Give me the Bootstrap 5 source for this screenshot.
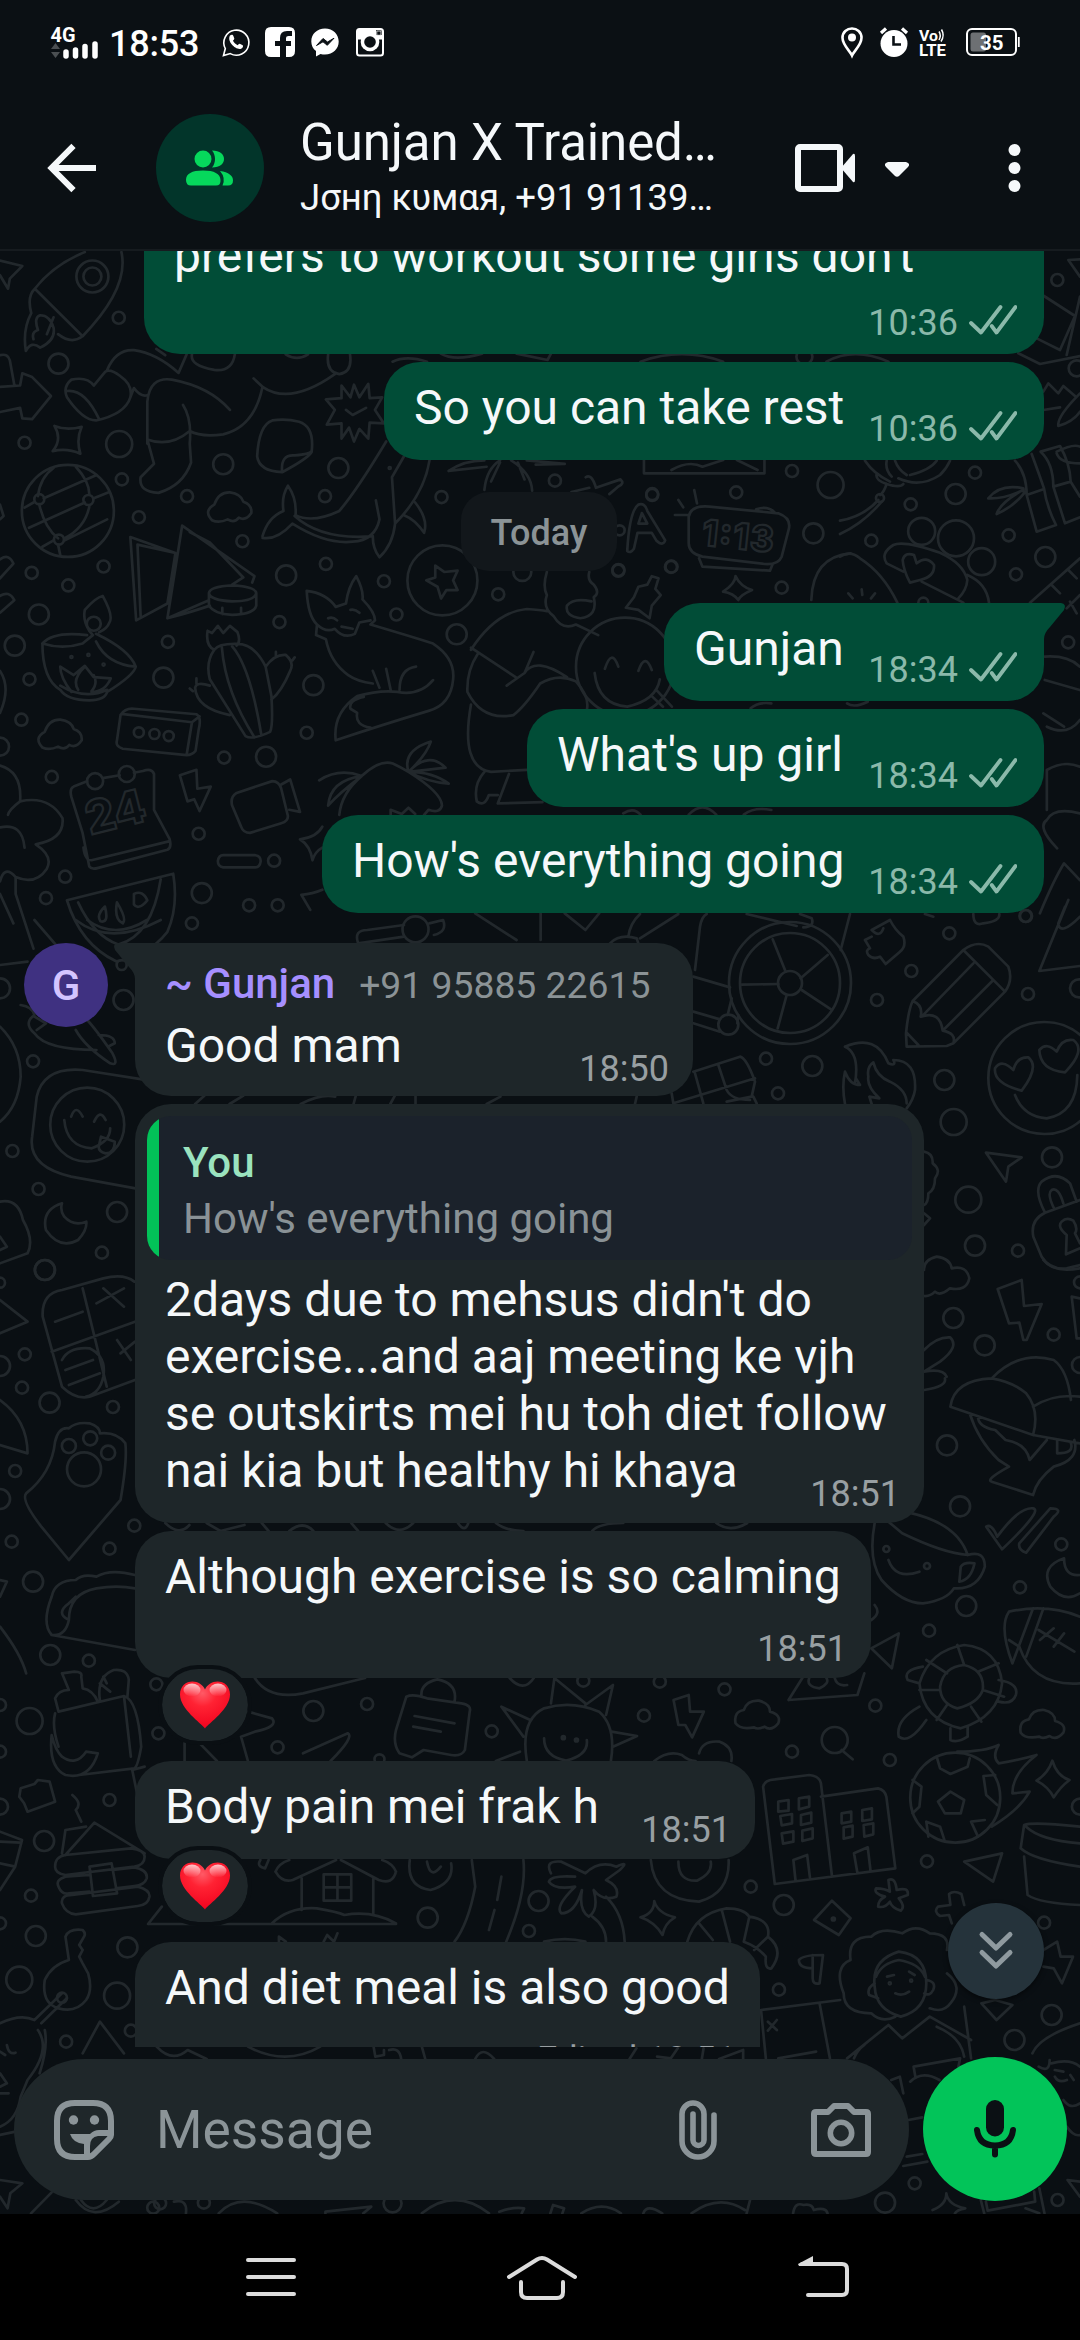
<!DOCTYPE html>
<html lang="en">
<head>
<meta charset="utf-8">
<meta name="viewport" content="width=device-width, initial-scale=1">
<title>Gunjan X Trained</title>
<link href="https://cdn.jsdelivr.net/npm/bootstrap@5.3.0/dist/css/bootstrap.min.css" rel="stylesheet">
<style>
  html, body { background:#000; }
  body { width:1080px; height:2340px; margin:0; overflow:hidden; font-family:Roboto,"Noto Sans",sans-serif; color:#f5f8fa; }
  svg { display:block; flex:none; overflow:visible; }
  .screen { width:1080px; height:2340px; }
  .statusbar { height:84px; background:#0b1014; padding:0 60px 0 51px; color:#fff; }
  .clock { font-size:36px; font-weight:500; line-height:36px; margin:4px 23px 0 10px; letter-spacing:-.2px; }
  .ic-insta { margin-left:17px; }
  .ic-alarm { margin-left:16px; }
  .ic-volte { margin-left:10px; }
  .ic-batt { margin-left:19px; }
  .topbar { height:167px; background:#0b1014; border-bottom:2px solid #161b1f; padding:3px 59px 0 48px; }
  .group-pic { width:108px; height:108px; background:#02352a; margin-left:60px; }
  .titles { width:440px; margin:-3px 0 0 36px; }
  .title-line { font-size:51px; line-height:60px; letter-spacing:-.1px; }
  .sub-line { font-size:36.5px; line-height:44px; margin-top:3px; }
  .ic-video { margin-left:55px; }
  .ic-caret { margin:3px 0 0 29px; }
  .chat { height:1963px; background:#0a0f13; }
  .paper { top:0; left:0; }
  .paper path, .paper ellipse { fill:none; stroke:#22282c; stroke-width:2.7; vector-effect:non-scaling-stroke; stroke-linecap:round; stroke-linejoin:round; }
  .paper text { fill:none; stroke:#22282c; stroke-width:2.2; font-family:Inter,sans-serif; font-weight:800; }
  .thread { height:1796px; padding:0 36px 0 135px; }
  .thread > * { flex-shrink:0; }
  .bub { border-radius:36px; min-height:98px; padding:17px 27px 0 30px; margin-bottom:8px; }
  .bub-out { background:#014d37; }
  .bub-in { background:#1e2629; padding-right:24px; }
  .msg { font-size:48px; line-height:57px; margin-bottom:24px; white-space:nowrap; }
  .time { font-size:36px; line-height:36px; margin-bottom:13px; gap:11px; white-space:nowrap; }
  .bub-out .time { color:#8bb9aa; }
  .bub-in .time { color:#989fa2; margin-bottom:11px; }
  .first { margin-top:-98px; width:900px; height:201px; }
  .first .msg { margin-bottom:20px; }
  .w-rest { width:660px; }
  .w-gunjan { width:380px; border-top-right-radius:0; }
  .w-whats { width:517px; }
  .w-hows { width:722px; }
  .w-good { width:558px; height:153px; margin-top:22px; padding-top:16px; border-top-left-radius:0; }
  .w-reply { width:789px; height:419px; padding-top:18px; }
  .w-calm { width:736px; height:147px; margin-bottom:0; }
  .w-body { width:620px; margin-bottom:0; }
  .w-diet { width:625px; height:147px; }
  .stacked .msg { margin-bottom:26px; }
  .day { background:#12171b; color:#8b9396; font-size:36px; font-weight:500; line-height:83px; height:79px; width:156px; border-radius:28px; margin:24px 0 32px 326px; }
  .tail-r { top:0; left:100%; }
  .tail-l { top:0; right:100%; }
  .who { font-size:42px; line-height:49px; font-weight:500; color:#a68fff; }
  .phone { font-size:37.3px; font-weight:400; color:#8b9396; margin-left:24px; }
  .good-row { height:88px; }
  .good-row .msg { margin-top:7px; }
  .reply-row { height:263px; }
  .reply-row .msg { margin-top:11px; }
  .av { width:84px; height:84px; left:-111px; top:0; background:#3f3181; color:#d4c4ff; font-size:42px; font-weight:500; line-height:86px; }
  .quote-box { background:#1b222b; border-radius:24px; height:144px; margin:-6px -12px 0 -18px; padding:19px 24px 0 36px; font-size:42px; line-height:57px; }
  .quote-box::before { content:""; position:absolute; left:0; top:0; bottom:0; width:12px; background:#02c258; }
  .quote-who { color:#9be3bf; font-weight:500; line-height:55px; }
  .quote-txt { color:#8a9296; }
  .react { width:86px; height:72px; border-radius:36px; background:#1e2629; outline:4px solid #0a0f13; margin:-9px 0 20px 27px; position:relative; z-index:2; }
  .composer { padding:12px 13px 0 14px; gap:14px; }
  .field { width:895px; height:141px; border-radius:71px; background:#1f272a; padding:0 38px 0 40px; color:#8b9498; }
  .hint { font-size:53.3px; line-height:60px; margin-left:42px; }
  .ic-cam { margin-left:94px; }
  .micbtn { width:144px; height:144px; background:#02c459; margin-top:-2px; }
  .jump { width:96px; height:96px; right:36px; top:1652px; background:#25333b; box-shadow:0 2px 5px rgba(0,0,0,.5); z-index:3; }
  .navkeys { height:126px; background:#000; padding:0 231px 0 246px; }
  .ic-home { margin-right:11px; }
</style>
<script src="https://cdn.jsdelivr.net/npm/bootstrap@5.3.0/dist/js/bootstrap.bundle.min.js"></script>
</head>
<body>
<svg width="0" height="0" class="position-absolute">
  <defs>
    <radialGradient id="red" cx=".45" cy=".25" r=".8"><stop offset="0" stop-color="#ff5a66"/><stop offset=".35" stop-color="#ff2233"/><stop offset="1" stop-color="#f0001c"/></radialGradient>
    <linearGradient id="gloss" x1="0" y1="0" x2="0" y2="1"><stop offset="0" stop-color="#fff" stop-opacity=".75"/><stop offset="1" stop-color="#fff" stop-opacity="0"/></linearGradient>
    <symbol id="ticks" viewBox="0 0 48 31"><path d="M2 19L12 28.5L31.5 3M22.7 22L27.5 28.5L46.5 3" fill="none" stroke="currentColor" stroke-width="3.8" stroke-linecap="round" stroke-linejoin="round"/></symbol>
    <symbol id="heart" viewBox="0 0 52 48"><path d="M26 47.500C22 42 1 28 1 13.500C1 5 7 .5 13.500 .5C19 .5 24 4 26 8.500C28 4 33 .5 38.500 .5C45 .5 51 5 51 13.500C51 28 30 42 26 47.500Z" fill="url(#red)"/><ellipse cx="13" cy="9" rx="8.500" ry="6.500" fill="url(#gloss)"/><ellipse cx="39" cy="9" rx="8.500" ry="6.500" fill="url(#gloss)"/></symbol>
  </defs>
</svg>

<div class="screen d-flex flex-column">
  <header class="statusbar d-flex align-items-center">
    <svg width="48" height="32" viewBox="51 26 48 32"><text x="50.500" y="42" font-size="19.500" font-weight="700" fill="#fff" textLength="25" lengthAdjust="spacingAndGlyphs">4G</text><path d="M51 49l4.500-6 4.500 6zM51 52l4.500 6 4.500-6z" fill="#4b4f52"/><path d="M66 52v4M75.500 50v6M85 46.500v9.500M95 44v12" stroke="#fff" stroke-width="5.500" stroke-linecap="round"/></svg>
    <div class="clock">18:53</div>
    <svg width="27" height="29" viewBox="0 0 27 29"><path d="M1.500 27.500L3.300 20.500A12.500 12.500 0 1 1 8.300 25.600Z" fill="none" stroke="#fff" stroke-width="1.600"/><path d="M8 7.500c1.500-1.500 3-.8 3.300.2l1 2.800c.2.800-1 1.800-1.300 2.300.8 1.800 2.500 3.500 4.700 4.400.6-.6 1.400-1.800 2.100-1.500l2.900 1.500c.8.500.2 2.800-1.600 3.500C14 22.500 4.500 13.500 8 7.500z" fill="#fff"/></svg>
    <svg width="30" height="30" viewBox="0 0 30 30" class="ms-3"><path fill="#fff" d="M6 0H24Q30 0 30 6V24Q30 30 24 30H21V19H26V14H21V11Q21 9 23.500 9H27V4H22Q15 4 15 11V14H10V19H15V30H6Q0 30 0 24V6Q0 0 6 0Z"/></svg>
    <svg width="28" height="29" viewBox="0 0 28 29" class="ms-3"><path d="M14 .5C6 .5 .3 6 .3 13.500c0 4 1.700 7.300 4.700 9.500V28.500L9.500 26c1.500.5 3 .6 4.500.6 8 0 13.700-5.600 13.700-13S22 .5 14 .5z" fill="#fff"/><path d="M5.500 17.500L12 10.500L16.500 14L23 10.200L16.300 17.300L12 13.800Z" fill="#0b1014" stroke="#0b1014"/></svg>
    <svg width="28" height="29" viewBox="0 0 28 29" class="ic-insta"><rect x="1" y="1" width="26" height="26.500" rx="2.500" fill="none" stroke="#fff" stroke-width="2"/><path d="M1 1H20V7H26V11.500H1Z" fill="#fff"/><circle cx="14" cy="14" r="9.300" fill="#fff"/><circle cx="14" cy="14" r="5.800" fill="#0b1014"/><rect x="20.800" y="3" width="4.200" height="4.200" fill="#0b1014" stroke="#fff" stroke-width=".8"/></svg>
    <svg width="22" height="30" viewBox="0 0 22 30" class="ms-auto"><path d="M11 28.500C9 24 1.500 18 1.500 10.800C1.500 5 6 1.500 11 1.500S20.500 5 20.500 10.800C20.500 18 13 24 11 28.500Z" fill="none" stroke="#fff" stroke-width="2.600"/><circle cx="11" cy="10.500" r="4" fill="#fff"/></svg>
    <svg width="30" height="30" viewBox="0 0 30 30" class="ic-alarm"><circle cx="15" cy="16.500" r="13.500" fill="#fff"/><path d="M2 6L7 1.500M28 6L23 1.500" stroke="#fff" stroke-width="3.200"/><path d="M14.500 9V17.500H22" fill="none" stroke="#0b1014" stroke-width="2.600"/></svg>
    <svg width="28" height="30" viewBox="0 0 28 30" class="ic-volte"><text x="0" y="13.500" font-size="15.500" font-weight="700" fill="#fff" textLength="19" lengthAdjust="spacingAndGlyphs">Vo</text><path d="M20 4.500Q22.500 8.500 20 13M22.500 2.500Q26 8.500 22 14.500" fill="none" stroke="#fff" stroke-width="1.500"/><text x="0" y="28.500" font-size="16" font-weight="700" fill="#fff" textLength="27" lengthAdjust="spacingAndGlyphs">LTE</text></svg>
    <svg width="54" height="28" viewBox="0 0 54 28" class="ic-batt"><rect x="1" y="1" width="49" height="26" rx="5" fill="none" stroke="#fff" stroke-width="2"/><rect x="4.500" y="4.500" width="15.500" height="19" rx="2.500" fill="#6d7073"/><path d="M52.800 9V19" stroke="#fff" stroke-width="1.800"/><text x="14" y="21.500" font-size="21" font-weight="700" fill="#fff" textLength="23.500" lengthAdjust="spacingAndGlyphs">35</text></svg>
  </header>

  <div class="topbar d-flex align-items-center">
    <svg width="48" height="48" viewBox="0 0 48 48"><path d="M25.500 1.800L3.500 24L25.500 46.200M4 24H48" fill="none" stroke="#f5f8fa" stroke-width="6"/></svg>
    <div class="group-pic rounded-circle d-flex align-items-center justify-content-center">
      <svg width="48" height="36" viewBox="0 0 48 36"><g fill="#06d85c"><circle cx="17" cy="9" r="8.500"/><path d="M26 .5C34 .5 38 4.500 38 9S34 17.500 26 17.500C30 13 30 5 26 .5Z"/><path d="M0 30Q0 20.500 17 20.500T34.500 30Q35 35.500 30 35.500H5Q0 35.500 0 30Z"/><path d="M34 21Q47 23 47 30.500Q47 35.500 42 35.500H36.500Q40 28 34 21Z"/></g></svg>
    </div>
    <div class="titles">
      <div class="title-line text-nowrap">Gunjan X Trained…</div>
      <div class="sub-line text-nowrap">Jσнη кυмαя, +91 91139…</div>
    </div>
    <svg width="61" height="48" viewBox="0 0 61 48" class="ic-video"><rect x="3" y="3" width="42" height="42" rx="2" fill="none" stroke="#f5f8fa" stroke-width="6"/><path d="M46 24L58 10Q60 9 60 12V36Q60 39 58 38Z" fill="#f5f8fa"/></svg>
    <svg width="24" height="15" viewBox="0 0 24 15" class="ic-caret"><path d="M3 0H21Q26 1.500 23 5L14.500 13.500Q12 16 9.500 13.500L1 5Q-2 1.500 3 0Z" fill="#f5f8fa"/></svg>
    <svg width="13" height="48" viewBox="0 0 13 48" class="ms-auto"><g fill="#f5f8fa"><circle cx="6.500" cy="6" r="6"/><circle cx="6.500" cy="24" r="6"/><circle cx="6.500" cy="42" r="6"/></g></svg>
  </div>

  <main class="chat position-relative overflow-hidden">
    <svg class="paper position-absolute" id="paper" width="1080" height="1963" viewBox="0 251 1080 1963">
      <text x="90" y="835" font-size="46" transform="rotate(-14 90 835)">24</text>
      <text x="701" y="545" font-size="36" transform="rotate(6 701 545)" textLength="72">1:13</text>
    </svg>

    <div class="thread position-relative overflow-hidden d-flex flex-column align-items-start">
      <div class="bub bub-out first align-self-end d-flex flex-column justify-content-end">
        <div class="msg">prefers to workout some girls don't</div>
        <div class="time d-flex align-items-baseline justify-content-end">10:36<svg width="48" height="31"><use href="#ticks"/></svg></div>
      </div>
      <div class="bub bub-out w-rest align-self-end d-flex justify-content-between align-items-end">
        <div class="msg">So you can take rest</div>
        <div class="time d-flex align-items-baseline">10:36<svg width="48" height="31"><use href="#ticks"/></svg></div>
      </div>
      <div class="day text-center">Today</div>
      <div class="bub bub-out w-gunjan position-relative align-self-end d-flex justify-content-between align-items-end">
        <svg class="tail-r position-absolute" width="22" height="34"><path d="M-1 0H17Q23 1 20 7L6 24Q0 30 0 36H-1Z" fill="#014d37"/></svg>
        <div class="msg">Gunjan</div>
        <div class="time d-flex align-items-baseline">18:34<svg width="48" height="31"><use href="#ticks"/></svg></div>
      </div>
      <div class="bub bub-out w-whats align-self-end d-flex justify-content-between align-items-end">
        <div class="msg">What's up girl</div>
        <div class="time d-flex align-items-baseline">18:34<svg width="48" height="31"><use href="#ticks"/></svg></div>
      </div>
      <div class="bub bub-out w-hows align-self-end d-flex justify-content-between align-items-end">
        <div class="msg">How's everything going</div>
        <div class="time d-flex align-items-baseline">18:34<svg width="48" height="31"><use href="#ticks"/></svg></div>
      </div>

      <div class="bub bub-in w-good position-relative">
        <svg class="tail-l position-absolute" width="22" height="34"><path d="M23 0H5Q-1 1 2 7L16 24Q22 30 22 36H23Z" fill="#1e2629"/></svg>
        <div class="av position-absolute rounded-circle text-center">G</div>
        <div class="who text-nowrap">~ Gunjan<span class="phone">+91 95885 22615</span></div>
        <div class="good-row d-flex justify-content-between align-items-end">
          <div class="msg align-self-start">Good mam</div>
          <div class="time">18:50</div>
        </div>
      </div>

      <div class="bub bub-in w-reply">
        <div class="quote-box position-relative overflow-hidden">
          <div class="quote-who">You</div>
          <div class="quote-txt">How's everything going</div>
        </div>
        <div class="reply-row d-flex align-items-end position-relative">
          <div class="msg align-self-start">2days due to mehsus didn't do<br>exercise...and aaj meeting ke vjh<br>se outskirts mei hu toh diet follow<br>nai kia but healthy hi khaya</div>
          <div class="time position-absolute end-0 bottom-0">18:51</div>
        </div>
      </div>

      <div class="bub bub-in w-calm stacked">
        <div class="msg">Although exercise is so calming</div>
        <div class="time text-end">18:51</div>
      </div>
      <div class="react d-flex align-items-center justify-content-center"><svg width="52" height="48"><use href="#heart"/></svg></div>

      <div class="bub bub-in w-body d-flex justify-content-between align-items-end">
        <div class="msg">Body pain mei frak h</div>
        <div class="time">18:51</div>
      </div>
      <div class="react d-flex align-items-center justify-content-center"><svg width="52" height="48"><use href="#heart"/></svg></div>

      <div class="bub bub-in w-diet stacked">
        <div class="msg">And diet meal is also good</div>
        <div class="time text-end">Edited 18:51</div>
      </div>
    </div>

    <div class="jump position-absolute rounded-circle d-flex align-items-center justify-content-center">
      <svg width="34" height="40" viewBox="0 0 34 40"><path d="M3 3.500L17 17L31 3.500M3 21.500L17 35L31 21.500" fill="none" stroke="#8f9a9f" stroke-width="5" stroke-linecap="round" stroke-linejoin="round"/></svg>
    </div>

    <div class="composer position-relative d-flex align-items-start">
      <div class="field d-flex align-items-center">
        <svg width="60" height="60" viewBox="0 0 60 60"><path d="M21 3H39Q57 3 57 21V35Q57 37 55 39L40 54Q37 57 34 57H21Q3 57 3 39V21Q3 3 21 3Z" fill="none" stroke="currentColor" stroke-width="6"/><circle cx="19.500" cy="20" r="4.700" fill="currentColor"/><circle cx="40.500" cy="20" r="4.700" fill="currentColor"/><path d="M16 34H36Q40 30 45 30H57V36H44Q36 37 36 46V56H30V54V44Q19 43 16 34Z" fill="currentColor"/></svg>
        <div class="hint">Message</div>
        <svg width="38" height="60" viewBox="0 0 38 60" class="ms-auto"><path d="M35 15V41A16 16 0 0 1 3 41V14A11 11 0 0 1 25 14V40A5.500 5.500 0 0 1 14 40V14" fill="none" stroke="currentColor" stroke-width="5.600" stroke-linecap="round"/></svg>
        <svg width="60" height="54" viewBox="0 0 60 54" class="ic-cam"><path d="M5 9H17L23 3H37L43 9H55Q57 9 57 11V49Q57 51 55 51H5Q3 51 3 49V11Q3 9 5 9Z" fill="none" stroke="currentColor" stroke-width="6" stroke-linejoin="round"/><circle cx="30" cy="30" r="10.700" fill="none" stroke="currentColor" stroke-width="5.600"/></svg>
      </div>
      <div class="micbtn rounded-circle d-flex align-items-center justify-content-center">
        <svg width="42" height="58" viewBox="0 0 42 58"><rect x="12" y="0" width="18" height="36.500" rx="9" fill="#0b1014"/><path d="M3 30Q5 45.500 21 45.500T39 30M21 46V54.500" fill="none" stroke="#0b1014" stroke-width="6" stroke-linecap="round"/></svg>
      </div>
    </div>
  </main>

  <nav class="navkeys d-flex align-items-center justify-content-between">
    <svg width="50" height="40" viewBox="0 0 50 40"><path d="M2 3H48M2 20H48M2 37H48" stroke="#dcdcdc" stroke-width="4" stroke-linecap="round"/></svg>
    <svg width="72" height="44" viewBox="505 2253 72 44" class="ic-home"><path d="M508 2275L536 2257.500Q541 2254.500 546 2257.500L574 2275M520 2280V2290Q520 2296 526 2296H556Q562 2296 562 2290V2280" fill="none" stroke="#dcdcdc" stroke-width="4" stroke-linecap="round" stroke-linejoin="round"/></svg>
    <svg width="51" height="42" viewBox="798 2255 51 42"><path d="M802 2263H842Q847 2263 847 2268V2289Q847 2294 842 2294H808" fill="none" stroke="#dcdcdc" stroke-width="4" stroke-linecap="round"/><path d="M798 2263L813 2255V2265H799Z" fill="#dcdcdc"/></svg>
  </nav>
</div>

<script>
/* Wallpaper doodles: each sheet has an origin, a scale, line art and bubbles [x, y, radius]. */
const sheets = [
{o:[0,250],k:[2.24,2.376],d:`M78 92Q60 110 70 150M78 92L185 205Q160 225 130 200M78 92Q120 35 190 5M185 205Q290 90 272 5M70 150Q50 190 58 240Q70 215 90 232Q125 215 120 185Q112 155 90 155Q75 160 85 190Q70 195 75 212M120 160L105 200
M0 25L50 38L22 68L18 92L0 60M0 325L45 322L50 293L72 302L114 347L72 402L50 400L45 375L0 385M0 250Q18 245 22 262L32 320
M210 322Q195 300 160 308Q140 325 150 350Q185 405 215 405Q280 390 292 350Q298 320 270 300Q245 280 235 290ZM150 335Q190 330 222 402M240 285Q260 235 300 238Q350 245 400 292L418 248M350 235L370 250M292 350L300 328Q315 350 330 345
M330 460V360Q335 300 385 308Q470 325 515 380M410 368Q430 400 425 460L428 505Q410 560 355 577Q310 575 315 540L345 508L330 450Q380 470 425 430Q450 445 500 438Q570 420 588 325L568 305M588 325Q650 370 750 295M735 248Q730 290 760 295Q790 290 784 248M640 248Q665 265 690 248M430 248Q425 275 480 285Q520 290 526 248
M610 405Q580 415 576 490Q580 525 632 528Q690 495 698 480Q705 420 670 408Q640 400 610 405ZM632 528Q628 485 660 488Q695 485 698 478
M793 320L805 350L825 318L828 352L856 350L840 380L860 412L828 410L825 448L805 425L793 455L782 422L765 448V412L732 415L750 380L730 355L765 352V322L785 350ZM775 380L790 392L820 375
M122 418Q150 430 183 420Q170 450 180 484Q150 470 118 478Q140 450 122 418Z
M98 590L215 535M88 605Q100 660 130 685M55 612L75 600M65 660L190 600M210 590L245 575M170 515Q200 550 200 580M200 610Q190 660 145 685M95 705L120 690M145 690L240 640M85 585Q90 540 120 518M130 700L135 725
M510 640Q490 650 475 642Q455 620 480 605Q490 575 515 576Q540 580 545 598Q565 605 563 625Q550 645 535 636Q525 650 510 640ZM130 1180Q110 1190 95 1182Q75 1160 100 1145Q110 1115 135 1116Q160 1120 165 1138Q185 1145 183 1165Q170 1185 155 1176Q145 1190 130 1180Z
M588 680Q600 635 635 620Q630 585 645 560Q665 590 662 630Q700 650 760 620Q800 570 865 455M588 684Q620 690 655 650Q730 700 790 693Q840 690 850 640L842 595M660 632Q720 690 835 680Q835 710 850 730Q880 700 885 650L878 540L905 490M885 650Q950 580 962 500M905 630Q930 640 950 672Q960 640 930 600
M292 682L393 720L375 840L305 880ZM308 700L315 870M308 700L393 720M408 655L375 875L468 832M408 655L570 775L565 790M425 670L470 695L545 778L520 795M375 875Q430 860 470 845M468 815Q470 800 520 797Q572 800 574 815Q570 835 520 835Q470 832 468 815V845Q480 865 520 867Q570 865 574 845V815M498 850V865M540 850V862
M200 905Q185 880 190 855Q215 825 230 822Q255 870 245 885Q240 900 222 908M200 905L208 915L185 935Q140 950 95 935Q95 1020 135 1045Q150 1070 200 1070Q235 1070 240 1050Q300 1010 304 990Q290 950 215 912M95 935Q120 905 195 915M215 930Q240 985 304 990M135 1035Q190 1070 240 1045M160 1050Q135 1015 135 990L165 1010L190 988L210 1015L248 1018Q235 1050 205 1050M175 1045Q160 1020 190 990M205 1048Q220 1030 210 1010
M465 905L475 910L488 893L500 910L515 893L532 908Q540 930 530 940M465 905Q460 940 480 950M480 950Q460 980 470 1020L550 1155Q565 1165 605 1145Q612 1130 608 1060L595 990Q570 935 530 936Q490 935 480 950M497 945Q505 1050 570 1158M520 942Q560 990 585 1150M595 990Q615 960 640 962Q660 980 650 1000Q630 1050 608 1068M470 1035Q440 1025 437 1040Q440 1090 515 1105M618 965V955M655 975L660 968M432 1048L425 1042M440 1030V1018
M687 810Q690 870 710 890L708 915L730 925Q740 980 780 1010Q800 1025 835 1030M687 810Q730 815 752 848L775 840Q780 800 798 775Q815 810 812 830Q840 860 840 880L830 890Q910 915 970 935Q1020 970 1015 1020Q1010 1080 960 1095Q850 1130 752 1165Q745 1100 800 1060Q850 1045 890 1050Q940 1060 970 1022M710 890Q730 910 750 900Q770 925 795 912L805 885L830 880M735 875Q745 870 755 880M785 855Q795 852 805 862M765 895L790 900M895 1045Q895 995 932 990M865 995L875 1045M835 1000L850 1040M815 1062Q780 1070 785 1090L800 1100Q795 1130 830 1135
M975 750L995 765L1025 762L1015 785L1025 808L1000 808L988 828L980 800L955 785L975 778Z
M1055 950Q1110 860 1180 853Q1210 855 1225 858M1225 765Q1215 800 1225 820Q1215 850 1240 870Q1260 905 1290 890L1340 915M1320 765Q1315 785 1330 795Q1345 815 1330 825Q1340 870 1300 875Q1265 870 1270 845Q1285 825 1325 835M1055 945L1155 1015M1195 955L1175 1005L1135 1035M1175 1005Q1200 965 1270 1015M1070 960Q1045 1000 1047 1050Q1080 1120 1150 1105Q1175 1085 1210 1030Q1250 1005 1290 1025Q1320 1060 1315 1090M1055 1080Q1030 1230 1100 1240L1180 1235M1085 1240Q1060 1270 1068 1310Q1085 1325 1095 1295L1115 1295M1140 1245L1115 1315L1215 1312
M1355 995Q1370 945 1385 990M1430 1000Q1445 955 1460 998M1332 1005Q1340 1080 1405 1085Q1470 1070 1478 1020M1460 1060L1485 1085M1470 1045L1505 1085
M1430 800L1450 795L1460 775L1475 780L1468 805L1480 820L1460 845L1455 875L1430 855L1402 850L1420 825Z
M1405 715Q1410 620 1430 605Q1445 600 1450 620L1490 690Q1485 705 1470 690L1460 672H1428L1420 710Q1412 722 1405 715ZM1430 650H1450L1438 625ZM1312 540Q1325 530 1335 565L1390 545Q1400 555 1385 562L1365 580M1280 575L1320 565
M1005 525Q1040 500 1085 500M1005 525L1090 515M1085 570Q1090 520 1120 500M1100 550L1120 505M1145 500Q1190 530 1192 572M1160 505L1175 545M1180 500L1265 508L1200 510
M0 735Q20 720 30 745L0 780M0 822Q20 808 32 832L0 862M0 1000Q25 1040 0 1100M0 605L8 632L0 640
M262 1165L270 1105Q280 1088 300 1090L440 1103Q452 1110 445 1140L438 1190Q430 1200 418 1200L275 1185Q258 1180 262 1165ZM272 1102L430 1122L418 1200M430 1122L447 1108
M195 1262L165 1275Q155 1280 160 1300L185 1385L200 1465Q205 1473 220 1468L375 1425Q385 1420 380 1400L345 1330V1245Q340 1230 320 1238L300 1242M230 1255L268 1248M187 1420Q190 1450 205 1450L378 1405
M403 1248L440 1235L442 1280L472 1275L447 1333L435 1305L420 1310ZM520 1320Q515 1300 530 1290L610 1262Q625 1262 630 1280L645 1345Q645 1358 630 1362L560 1385Q545 1385 540 1370ZM630 1270L650 1258L672 1335L648 1330
M500 1438H572Q584 1440 584 1452Q582 1467 572 1467H500Q488 1465 488 1452Q490 1438 500 1438Z
M715 1260Q760 1230 810 1250Q740 1260 735 1320Q760 1290 810 1250Q850 1210 880 1220Q900 1230 915 1240Q900 1190 965 1168Q955 1200 915 1240Q960 1190 998 1230Q960 1235 915 1240Q970 1240 1005 1268Q960 1265 915 1240Q990 1290 990 1320Q985 1340 960 1330L950 1342M760 1342Q765 1290 810 1250M875 1342V1330L900 1340L915 1325L930 1340
M722 1370Q710 1395 672 1400Q695 1415 700 1450Q705 1430 722 1420M722 1520Q700 1530 675 1532L695 1568
M0 1225Q50 1240 45 1310Q20 1330 18 1342M45 1310Q110 1295 140 1350Q145 1400 80 1412Q120 1440 105 1470Q80 1510 35 1490Q10 1460 0 1500M0 1372Q50 1360 55 1420M35 1490V1530L75 1660M0 1530L30 1600
M150 1545L388 1482Q400 1560 375 1620Q330 1680 260 1690Q180 1650 150 1545ZM175 1550Q210 1630 265 1650Q340 1630 360 1495M300 1530Q320 1520 330 1545Q310 1570 300 1555ZM262 1550Q285 1590 275 1600Q255 1590 262 1550ZM235 1560Q215 1580 225 1595Q245 1600 235 1560Z`,
c:[[207,63,16],[207,63,9],[152,620,46],[88,592,5],[198,594,5],[132,688,5],[210,888,7],[991,785,35],[1400,990,49],[311,1146,5],[346,1150,5],[378,1155,5],[213,1262,8],[284,1245,8],[266,161,6],[131,270,10],[55,458,6],[267,461,13],[273,545,6],[311,635,6],[419,585,6],[500,509,10],[543,692,6],[758,518,10],[728,585,6],[989,587,6],[873,518,1],[641,773,10],[730,746,6],[860,787,6],[888,866,6],[1023,913,10],[1116,818,6],[1170,765,9],[1243,548,6],[1461,580,6],[1385,762,6],[1503,753,6],[1388,666,5],[71,767,6],[153,797,6],[232,752,6],[87,866,10],[33,940,10],[376,931,6],[66,1020,6],[366,1016,10],[626,884,6],[702,1034,10],[687,1147,6],[48,1116,6],[0,1180,9],[116,1252,6],[596,1204,10],[502,1206,6],[445,1387,6],[614,1451,6],[146,1489,6],[452,1528,10],[103,1540,6],[558,1557,6],[622,1557,6],[160,967,1],[198,962,1],[232,985,1]]},
{o:[840,230],k:[3,3],d:`M720 88L685 90L720 140M612 198L705 258L660 360L590 325M720 200L680 375M535 370L600 402L720 378M610 485L625 460L655 490L670 468L705 498M610 540L660 532M720 490Q650 560 655 588Q700 575 720 545
M525 692Q560 730 560 795L590 905L648 885Q620 830 612 775Q600 740 575 672M560 795L610 778M602 665Q640 700 640 770L675 880L720 862M602 665L660 648Q690 700 692 755L720 800M640 770L692 755M650 665Q700 640 720 650M650 670Q660 700 720 700M445 805Q480 760 550 775L552 790Q520 830 470 852Q480 820 540 785M445 805Q490 808 550 780
M75 692Q100 730 150 755M110 732Q105 750 140 762Q180 775 190 762M140 692Q135 720 155 740M165 692Q175 720 200 735M210 735Q270 720 290 692M175 745Q240 775 300 735Q320 715 330 692M140 762Q130 790 120 795M125 815Q70 880 0 912M115 810Q70 860 0 872
M140 1000Q120 970 160 945Q190 930 300 968Q370 1000 382 1050Q380 1080 355 1105M140 1000L190 1025M210 1058Q190 1020 188 990Q195 965 222 975L230 1000Q260 975 282 1005Q285 1040 240 1050ZM245 1055L370 1118M382 1035Q440 1060 447 1118
M570 1118L720 985M680 1135L720 1095M635 1065L660 1090M685 1020L710 1045M690 1115L710 1150M0 980Q30 960 60 985Q130 1030 172 1118M65 1078L67 1095M25 1090L38 1105M105 1090L93 1105`,
c:[[120,804,4],[245,904,13.5],[348,925,18],[425,995,13.5],[652,150,6],[710,415,8],[405,728,6],[347,792,10],[212,823,6],[94,932,6],[506,916,6],[616,981,10],[528,1033,6],[250,1118,5]]},
{o:[0,240],k:[1.452,3],d:`M1000 830Q1003 795 1030 800L1130 820Q1150 835 1145 870L1135 950Q1130 975 1110 972L1020 950Q1000 940 1000 910ZM1015 955L1020 980L1118 992L1122 972M1098 808Q1115 795 1125 818M1012 790L1008 750M992 802L985 780M980 825H998
M935 660V700H1110V660M975 690Q1000 660 1020 680L1050 660M1070 660L1100 690M1050 1055Q1068 1030 1068 1008Q1075 1040 1092 1050Q1075 1065 1072 1080Q1065 1060 1050 1055M1178 1080Q1180 950 1235 940
M570 365Q590 345 620 365M640 341Q660 365 700 341M930 365Q990 320 1050 365M1200 365Q1240 320 1290 365M750 341L795 360L800 341`,
c:[[1206,735,13],[1181,880,10],[947,765,6],[1069,757,6],[1150,693,6],[1135,1043,6],[975,980,6],[898,990,6],[1168,350,8]]},
{o:[0,580],k:[1.452,3],d:`M1517 230Q1550 225 1568 260M1517 300L1568 330M1520 440Q1550 470 1568 420M1515 400L1545 440M1520 690V570Q1545 540 1568 560M1535 805Q1505 740 1520 720Q1530 680 1568 700M1510 1000Q1530 900 1545 850L1568 900
M690 1000L750 1080M785 1000V1080M820 1000L850 1050L870 1000M1090 385Q1100 365 1120 370M1230 370Q1240 385 1260 365M905 700Q920 680 930 704M1000 704Q1020 660 1040 704M1080 704Q1095 680 1120 690`,
c:[[1551,187,6],[1489,1008,6]]},
{o:[0,920],k:[2.178,3],d:`M75 0L125 80M165 0Q240 80 350 0M190 0Q250 60 320 0M0 135L60 125M780 70Q770 30 800 30L880 15M780 70L880 50M935 10L965 0Q975 35 945 45
M45 255Q70 260 75 285Q50 310 75 340Q100 390 210 390M75 290L100 310L80 330M165 330Q185 380 240 430Q260 440 245 400Q210 330 190 300M215 345Q250 345 250 370L235 380
M295 805L155 770Q60 740 70 650L80 530Q95 440 180 450L310 478M155 590Q165 550 180 590M205 605Q218 565 230 600M140 600Q145 680 200 685Q240 665 240 625M215 680L220 650L250 665Q250 700 230 700Q215 695 215 680
M135 850Q90 870 100 930Q130 990 170 960Q190 930 188 905Q160 920 140 890Q130 870 135 850ZM0 320Q45 380 45 470Q40 560 0 605M0 845Q40 835 50 900Q75 960 60 1000L0 1030M0 990L15 980L0 950
M425 552L445 527M500 552L530 527M655 552Q700 520 730 530M770 552L775 527M850 552L860 527M905 552V527M1060 552L1090 530`,
c:[[905,28,13],[190,614,37],[72,424,6],[27,693,6],[84,807,6],[255,876,10],[222,998,6],[98,1050,10],[269,240,10],[265,135,5],[418,10,6],[0,205,10]]},
{o:[600,900],k:[3,3],d:`M518 118L557 215M602 235L683 165M425 254L535 252M605 270L693 328M560 285L533 385M320 42Q305 50 300 80L285 210M280 230L390 262M440 42L590 78M610 82Q645 80 635 55L600 42M750 42L722 150M395 295L383 345M280 335L360 358M280 370L360 395M415 345L412 370M85 110Q90 70 120 42M120 115L235 42M30 130Q60 100 110 115L115 130
M815 90L870 60Q885 90 910 110Q920 140 900 155L857 192L840 170Q820 180 805 165Q795 150 810 145L795 120L815 110M815 90Q840 115 850 85
M938 303L1090 150Q1130 120 1165 140L1225 200Q1240 240 1215 275L1060 430L1040 438L920 440L918 400Q925 330 938 303ZM1090 150L1215 275M965 350L1120 190M1030 390L1180 240M938 303Q970 315 962 350Q1020 330 1028 392Q1070 400 1060 430M920 398L955 435
M735 440Q830 400 865 490Q890 500 880 480Q950 480 945 570Q940 600 920 625M735 440Q780 460 765 550M735 612Q725 560 735 515Q750 555 780 555L768 535M815 612L808 590L838 595Q800 560 805 530Q800 500 820 487Q830 530 870 545Q920 570 920 610
M280 515L420 470Q440 475 465 545L455 590L380 605M215 580L220 610L465 535M285 520L310 610M355 495L380 570Q395 600 450 600M460 590L470 610M110 590L105 612
M1265 572Q1180 550 1185 505Q1205 475 1240 510Q1250 470 1285 472Q1320 500 1265 572ZM1395 517Q1320 510 1318 450Q1340 425 1370 455Q1385 415 1420 420Q1460 450 1395 517ZM1245 585Q1270 650 1340 655Q1430 640 1432 525
M1158 758L1265 772L1225 800L1218 845ZM1335 938L1440 900M1335 938Q1290 960 1300 1010L1325 1070Q1350 1110 1400 1105L1440 1095M1335 938Q1300 870 1325 845Q1370 810 1410 850L1430 905M1362 925Q1340 880 1355 870Q1375 860 1390 910M1398 1063L1400 1005Q1370 980 1385 965Q1400 950 1420 962Q1435 985 1425 1000L1440 1030M1398 1063L1440 1045
M972 1110Q970 1080 1010 1070Q1050 1075 1055 1105Q1100 1095 1108 1135Q1100 1175 1050 1165Q1020 1190 1005 1175Q990 1190 972 1188M1193 1167L1265 1140L1272 1218L1325 1212L1280 1320H1270L1258 1268L1227 1270ZM1440 1195L1415 1190L1430 1315H1440
M972 755Q1000 760 998 790Q1025 810 1005 835Q1005 870 985 880Q985 910 972 915M972 940L990 955L972 975M972 1350Q1010 1310 1050 1312Q1080 1340 1020 1385L972 1415Q1030 1405 1040 1430
M1405 0L1318 213L1440 198M1440 50Q1380 110 1375 70L1395 20M975 42L1000 50M1120 42Q1120 80 1150 70Q1200 65 1198 42`,
c:[[570,249,61],[570,249,50],[570,249,12],[385,374,10],[1333,534,56],[1048,100,6],[934,213,6],[831,300,6],[1278,48,6],[1284,282,6],[1437,265,9],[498,476,6],[637,498,10],[534,580,6],[1033,540,10],[1061,666,13],[1356,772,10],[1105,899,13],[1125,1037,10],[1254,1052,6],[1060,1254,10],[1154,1336,10],[1361,1304,6],[1440,1147,6],[1440,1395,8]]},
{o:[0,1260],k:[1.452,3],d:`M62 170Q60 100 90 90L150 55Q180 40 195 65M62 170L90 380Q110 420 130 410L196 360M75 275L196 185M120 85L155 380M80 185L120 155M140 130L180 85M150 85L180 140M170 240L190 300M175 280L196 245M90 300Q100 260 130 265Q155 290 150 350Q145 400 125 410M95 330L135 300M100 375L145 340
M80 545Q85 500 100 505Q110 485 130 490Q145 500 145 520Q170 515 182 550Q185 600 175 720L100 900L60 800Q30 720 38 700Q75 640 80 545
M196 1170L75 1125Q60 1090 75 1010Q80 960 110 960Q120 940 140 950Q160 925 196 945M100 1080Q100 1000 140 985Q170 975 196 985M75 1125Q95 1130 100 1080Q80 1060 100 1030L110 1010M0 120L40 185L0 220M0 420Q40 480 40 580L0 555M0 960L10 965L0 1010M0 1100Q30 1180 38 1240
M1515 0Q1530 40 1568 25M1380 440Q1385 360 1440 355Q1480 270 1530 300Q1550 330 1555 420M1380 440L1500 525Q1510 450 1490 400Q1470 365 1440 355M1408 460Q1420 540 1450 600L1465 620Q1430 660 1440 665L1500 705Q1505 660 1530 620Q1568 600 1560 540M1500 525L1568 550M1500 440Q1530 400 1568 410M1420 470Q1420 500 1445 510L1460 540Q1490 550 1495 600L1520 540M1535 540V580Q1560 580 1555 550M1342 390Q1375 380 1372 355
M1432 800Q1440 790 1448 830Q1480 740 1500 745Q1515 750 1455 868ZM1480 850L1525 745Q1545 745 1530 770L1490 878Q1478 870 1480 850
M1270 790Q1260 900 1280 960Q1310 1030 1340 1030Q1375 1020 1385 985Q1420 990 1430 920Q1430 870 1405 885M1320 758Q1390 790 1405 885Q1370 880 1310 820L1290 785M1393 965Q1410 960 1415 910Q1400 905 1395 920L1393 965M1290 900Q1300 960 1335 935M1545 895Q1510 920 1525 980Q1545 1030 1568 1000M1545 895Q1545 950 1568 945
M1470 1210Q1450 1100 1465 1055Q1520 1030 1568 1070M1470 1210L1500 1045M1490 1190L1515 1045M1508 1110L1560 1175M1510 1140L1530 1105M1530 1160L1545 1120M1265 1165L1305 1120L1295 1225ZM1265 1080Q1280 1060 1270 1035
M240 789Q260 830 275 795M300 789L320 813L355 795M380 789L390 813M420 813Q440 780 455 813M510 789L520 813M560 789Q580 830 600 789M665 789Q675 820 680 789M720 789Q735 813 760 813M860 813Q870 789 905 789M1040 789Q1060 820 1085 789`,
c:[[100,558,7],[131,535,7],[157,578,7],[122,628,17],[1287,867,3],[1346,918,3],[65,30,10],[0,68,5],[36,283,6],[0,318,10],[32,383,6],[72,428,10],[164,441,6],[22,633,6],[0,717,10],[195,797,6],[17,845,6],[159,866,6],[48,965,10],[1375,556,10],[1394,739,10],[1403,1038,10],[1481,982,6],[1541,853,6],[1349,1112,6]]},
{o:[0,1640],k:[1.452,3],d:`M85 215L180 168Q200 180 205 320Q200 380 195 385L115 405M80 220Q75 260 85 320M85 215L80 175Q85 150 100 150L90 100L108 95Q120 95 118 110L120 145Q135 150 142 185M145 180Q140 110 165 90Q185 85 187 120L185 170M145 130L160 155M150 110L155 130M180 168L190 350M75 285Q70 380 95 405Q130 420 142 340L125 335Q110 380 90 350Q80 330 75 285Z
M30 445L50 432L55 420L72 425L80 485L40 515L35 490L28 470ZM105 465Q120 490 110 510L118 545M95 645L137 548L210 640M90 640L95 570L125 560M80 680Q80 650 95 645L190 625Q210 630 210 650Q210 675 195 680L95 705Q80 700 80 680ZM85 740Q80 720 95 710L130 705M85 740Q90 765 100 760L130 755M165 690L195 682Q215 690 213 715Q210 735 195 738L168 745M90 790Q88 765 105 765L200 740Q218 750 217 770Q215 795 200 798L110 823Q95 820 90 790M130 680L162 670L170 760L135 768ZM210 380L192 390L200 470
M100 960L95 890Q100 865 120 870Q125 880 122 890L115 915L120 930L115 950L120 970L128 1000Q135 1050 125 1080Q110 1120 85 1105Q60 1090 65 1020Q75 975 100 960ZM90 1060L50 1140M97 1075L60 1150M0 1150Q30 1120 50 1140M120 1240L145 1145L180 1240
M215 852L235 800M215 852H575M395 850Q420 800 460 805Q490 815 500 825Q540 810 575 850M438 715V810M542 715V825M400 695Q410 730 425 720L488 660M575 695Q570 735 550 720L495 660M378 660Q372 680 385 685L390 660M470 703H510V782H470ZM490 703V782M470 742H510M400 695Q405 670 420 660M575 695Q570 670 555 660
M580 340Q570 310 575 270L590 170Q600 160 620 175L670 190Q685 195 682 215L675 330Q670 350 655 345L615 330L598 352ZM612 168Q610 130 635 118Q665 130 660 185M602 228L660 250M600 260L640 275
M720 363L755 335M800 190L805 114L850 190M850 195L890 135L880 225M770 240L728 200L760 290M888 275L925 288L890 320M765 363Q755 240 790 205Q830 180 870 215Q895 260 887 363M790 295Q790 350 822 362Q855 345 852 300
M360 215L395 235Q405 260 370 275L350 290L360 363M268 305V363M290 310L315 363M440 340L505 280Q515 290 480 363M370 114Q390 180 440 160L530 114M740 114Q760 160 775 114M950 363Q970 330 990 345Q1000 363 1010 363M1015 340Q1020 300 1045 305Q1065 320 1062 363M1145 180L1165 114M1255 100L1245 165L1145 180M1175 114Q1170 140 1190 145Q1205 130 1200 114M1212 114Q1215 140 1230 135
M978 180L1000 165L1002 215L1022 215L1005 292L995 255L985 255ZM1095 262Q1075 270 1068 250Q1065 215 1080 210Q1085 180 1102 182Q1118 190 1118 215Q1135 225 1130 250Q1120 275 1110 260Q1100 270 1095 262ZM1509 290Q1489 298 1482 278Q1479 243 1494 238Q1499 208 1516 210Q1532 218 1532 243Q1549 253 1544 278Q1534 303 1524 288Q1514 298 1509 290ZM1222 330L1238 358
M1125 732L1108 440Q1110 420 1125 418L1175 405Q1190 408 1192 430L1208 708M1192 470L1275 445Q1285 450 1287 470L1300 685L1125 732M1130 485L1145 480V512L1130 515ZM1160 475L1175 470V500L1160 508ZM1133 528L1150 522V550L1135 556ZM1163 525L1178 518V548L1163 555ZM1135 580L1152 574V605L1137 611ZM1165 572L1180 565V595L1165 603ZM1222 520L1236 515V545L1222 550ZM1252 510L1266 505V538L1252 543ZM1225 562L1238 557V590L1225 596ZM1254 555L1268 550V583L1255 590ZM1155 720L1152 660L1172 645L1176 712M1245 700L1240 640L1260 622L1264 692
M1380 455L1400 480L1395 520L1372 520L1362 485ZM1360 350L1365 385L1380 402L1405 380L1408 355M1445 405L1428 408L1432 465L1448 495M1325 420L1338 440L1335 500L1325 520M1348 590L1345 545L1365 560L1372 605M1420 590L1410 545L1430 540M1390 335Q1430 335 1450 315Q1440 350 1450 370Q1480 360 1505 345Q1470 400 1470 460L1495 455Q1480 510 1440 560
M1335 130Q1350 30 1400 15Q1450 25 1455 130Q1450 230 1395 265Q1340 240 1335 130ZM1365 140Q1370 80 1400 75Q1430 90 1427 150Q1420 190 1390 205Q1365 190 1365 140M1390 15L1400 75M1345 60L1375 100M1335 150H1365M1420 95L1450 70M1427 150L1458 170M1410 200L1425 245M1375 195L1360 240M1340 80Q1310 90 1318 120L1335 130M1450 120Q1480 130 1475 165Q1470 195 1450 185M1335 200Q1300 240 1305 290Q1320 315 1345 240M1380 265V300Q1390 310 1405 290V260M1568 130Q1500 140 1480 20L1465 0
M1528 362Q1535 410 1553 420Q1540 440 1530 472Q1522 440 1505 422Q1522 400 1528 362ZM1482 625L1487 555Q1500 545 1568 560M1482 625Q1500 660 1568 680M1490 560Q1510 600 1568 610M1487 650L1492 765Q1510 790 1568 795M0 575L32 600L22 680L0 670M22 680L0 750M0 605L30 608
M1400 665L1455 640L1442 725ZM1208 782L1235 835L1218 885L1182 840ZM1290 720Q1300 710 1302 750Q1320 740 1318 765L1305 775Q1315 800 1308 812Q1295 805 1292 785Q1285 805 1275 800Q1275 780 1285 770Q1268 760 1272 745Q1285 745 1292 755ZM1400 795L1396 762Q1385 750 1378 762L1380 795L1362 800Q1355 815 1365 828L1378 825L1382 850
M800 700Q790 660 815 665L850 700Q870 660 895 680Q915 660 900 690L880 720Q900 740 895 770Q875 785 862 750Q870 810 855 830Q840 810 845 750Q835 820 815 820Q805 800 835 740Q805 750 797 725Q800 705 835 710M880 770Q905 820 907 905M860 830Q880 860 880 905M660 905Q680 850 690 740L685 660M760 660Q765 760 735 905M728 710L722 780M718 810L710 870M595 660Q590 740 625 750Q660 730 655 670M640 680Q625 720 620 665M945 660Q950 780 1015 785Q1060 760 1058 660M985 665Q985 725 1012 722Q1035 700 1032 665M950 783Q955 820 980 832Q965 850 962 885Q950 845 930 832Q950 820 950 783Z
M998 905Q1010 820 1055 805Q1080 805 1088 830Q1120 840 1115 890Q1140 930 1120 985Q1110 990 1112 950Q1100 920 1080 905M1048 810L1060 905M1088 830L1080 905M1015 850L1035 900M1115 890L1095 930M1160 960Q1165 945 1195 945L1190 1030Q1180 1035 1180 1015V985Q1160 985 1160 960M1180 945V985
M1225 1060Q1210 980 1235 960Q1230 890 1265 890Q1280 860 1310 880Q1330 850 1350 880Q1380 880 1375 930M1225 1060Q1225 1120 1265 1120Q1280 1150 1300 1130M1350 1105Q1370 1120 1380 1090Q1400 1040 1375 1000M1270 1040Q1265 960 1305 935Q1345 945 1345 1030Q1345 1110 1308 1130Q1272 1110 1270 1040M1272 1010Q1280 970 1305 960Q1335 970 1343 1010M1345 1020Q1360 1025 1355 1050Q1350 1070 1342 1060M1270 1030Q1258 1045 1262 1065L1275 1075M1288 1010L1298 1005M1320 995L1328 1005M1300 1060Q1310 1070 1320 1055M1105 1110L1220 1080M1105 1110L1112 1255M1190 1090L1205 1255M1115 1145L1128 1170M1128 1140L1115 1172M1130 1255L1185 1235M1230 1255L1290 1155L1310 1195L1350 1130L1410 1200M1410 1255L1400 1100M1240 1255Q1245 1230 1255 1215M1360 1160Q1395 1190 1400 1250
M1425 1090L1445 1080L1470 1095L1447 1140ZM1515 930L1535 905L1540 950H1558L1542 1030L1530 985L1515 980M405 905V890L415 905M470 905L475 885L485 905L490 880M790 905Q820 890 850 905`,
c:[[1212,300,13],[1387,473,45],[90,1073,5],[818,293,1.5],[837,300,1.5],[1210,837,1.5],[1292,1030,1],[1323,1022,1],[73,45,10],[129,62,6],[0,195,6],[43,243,13],[0,335,6],[227,133,6],[230,280,6],[455,213,10],[403,322,6],[533,192,6],[551,358,5],[714,274,6],[847,122,6],[958,125,6],[935,227,6],[1052,148,6],[1271,197,6],[1150,335,6],[1292,360,6],[159,480,6],[0,500,8],[64,603,10],[45,767,6],[0,850,6],[52,888,10],[185,922,10],[28,1019,13],[170,1067,13],[190,1172,6],[96,1205,6],[621,833,10],[782,783,10],[768,873,6],[1090,740,6],[1138,795,10],[1346,664,6],[1516,848,6],[1131,1049,6],[1527,1125,10],[1473,1200,10],[1568,500,8]]},
{o:[540,1880],k:[2.904,3],d:`M1430 520Q1450 470 1568 430M1448 560Q1480 580 1480 540M1568 560Q1540 535 1485 550M1495 570L1520 575M1540 585L1550 600M1495 590Q1505 610 1530 600M1520 660Q1540 690 1568 670M1530 740Q1550 770 1568 765M1020 600L1045 590L1055 640M1090 590L1085 560L1220 535L1215 560M1075 605Q1110 570 1160 600M1070 720L1110 712M1055 858L1125 845M1065 830L1110 822M1568 905L1532 900L1568 950
M1140 990Q1180 975 1180 940Q1185 975 1235 985Q1210 990 1205 1000M1280 960L1290 1000M1295 965L1300 992L1438 965L1435 935M1450 925L1465 1000M1410 985L1450 1000M30 1000L38 975L70 985L65 1000M120 1000Q180 960 235 1000M300 1000Q310 970 355 1000M440 1000Q520 940 595 990M610 960L600 1000M735 1000Q740 965 765 975Q790 970 795 990Q830 980 835 1000M260 537L280 505M340 530L380 535L400 505M470 537L475 505M520 537L590 510V537`,
c:[[1088,910,6],[1002,968,10],[1503,960,6]]},
{o:[0,2030],k:[2.904,3],d:`M110 0Q150 60 80 150L60 200Q50 270 0 290M130 0Q140 50 115 130M0 315L45 305M20 45Q25 75 45 68M0 65L15 75M0 130L20 160L0 170M0 190H25M0 450L65 460L30 490L22 535L0 500M90 550L150 487M220 510Q270 580 345 515M235 510Q270 560 310 510M505 515Q545 505 540 550M635 550Q700 480 805 550M945 552V545L1078 530L1055 550M1225 550Q1320 470 1420 550M1450 545Q1490 530 1522 535L1515 550M455 50Q500 100 545 60L600 87M720 50Q830 110 930 50M1085 50L1090 80L1115 75V60M1130 60Q1160 50 1165 87M1225 50L1235 87M1380 87Q1400 45 1435 87`,
c:[[445,533,6],[465,520,6],[592,518,6],[1140,520,9]]}
];
const paper = document.getElementById('paper');
for (const s of sheets) {
  const [kx, ky] = s.k;
  const marks = s.c.map(([x, y, r]) => `<ellipse cx="${x}" cy="${y}" rx="${r * kx}" ry="${r * ky}"/>`).join('');
  const g = document.createElementNS('http://www.w3.org/2000/svg', 'g');
  g.setAttribute('transform', `translate(${s.o[0]} ${s.o[1]}) scale(${1 / kx} ${1 / ky})`);
  g.innerHTML = `<path d="${s.d}"/>${marks}`;
  paper.appendChild(g);
}
</script>
</body>
</html>
